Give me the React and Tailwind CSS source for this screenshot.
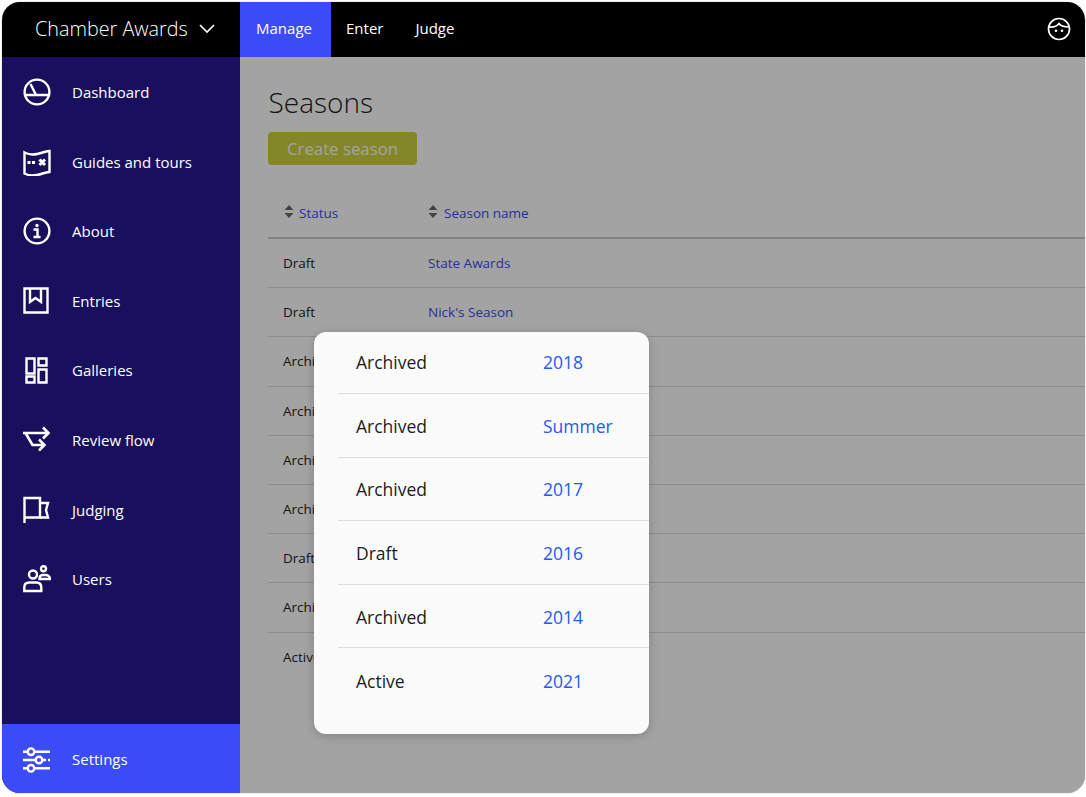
import React from 'react';

const font = "font-['Open_Sans',sans-serif]";

const navItems = [
    { label: 'Dashboard', icon: DashboardIcon },
    { label: 'Guides and tours', icon: MapIcon },
    { label: 'About', icon: InfoIcon },
    { label: 'Entries', icon: EntriesIcon },
    { label: 'Galleries', icon: GalleriesIcon },
    { label: 'Review flow', icon: FlowIcon },
    { label: 'Judging', icon: FlagIcon },
    { label: 'Users', icon: UsersIcon },
];

const tableRows = ['Draft', 'Draft', 'Archived', 'Archived', 'Archived', 'Archived', 'Draft', 'Archived', 'Active'];

const modalRows = [
    ['Archived', '2018'],
    ['Archived', 'Summer'],
    ['Archived', '2017'],
    ['Draft', '2016'],
    ['Archived', '2014'],
    ['Active', '2021'],
];

function Svg({ children }) {
    return (
        <svg width="28" height="28" viewBox="0 0 28 28" fill="none" stroke="white" strokeWidth="2.4">
            {children}
        </svg>
    );
}

function DashboardIcon() {
    return (
        <Svg>
            <circle cx="14" cy="14" r="12.4" />
            <path d="M2 17h24M7.5 6l5.500 11" />
        </Svg>
    );
}

function MapIcon() {
    return (
        <Svg>
            <path d="M1.500 4.500c4 2 8 2.500 12.500 1.500s8-2.500 12.500-3v21c-4.500.5-8 2-12.500 3s-8.500 .5-12.500-1.500z" />
            <path d="M4.500 14.500h3M9 14.500h3" strokeWidth="3" />
            <path d="M16.500 11.500l5.500 5.500M22 11.500l-5.500 5.500" strokeWidth="3" />
        </Svg>
    );
}

function InfoIcon() {
    return (
        <Svg>
            <circle cx="14" cy="14" r="12.400" />
            <circle cx="14" cy="8.500" r="1.700" fill="white" stroke="none" />
            <path d="M10.500 12.500h4v7M10.500 20h7" strokeWidth="2.400" />
        </Svg>
    );
}

function EntriesIcon() {
    return (
        <Svg>
            <path d="M1.500 1.500h23v24h-23z" />
            <path d="M7 2v13l5.500-4 5.500 4V2" />
        </Svg>
    );
}

function GalleriesIcon() {
    return (
        <Svg>
            <path d="M3.500 1.500h8v15h-8zM15.500 1.500h8v7h-8zM15.500 12.500h8v13h-8zM3.500 19.500h8v6h-8z" />
        </Svg>
    );
}

function FlowIcon() {
    return (
        <Svg>
            <path d="M0 7h25M20 1.500l5.500 5.500-5.500 5.500" strokeWidth="2.600" />
            <path d="M2.500 7l7 12h11.500M16 13.500l5.500 5.500-5.500 5.500" strokeWidth="2.600" />
        </Svg>
    );
}

function FlagIcon() {
    return (
        <Svg>
            <path d="M1.500 27V2H17v19.500H1.500" />
            <path d="M17 7h8l-2 7 2 7.500h-8" />
        </Svg>
    );
}

function UsersIcon() {
    return (
        <Svg>
            <circle cx="10" cy="9.500" r="4" />
            <path d="M1.300 26v-3.500c0-3 2-5 5-5h7c3 0 5 2 5 5V26z" />
            <circle cx="20.500" cy="3.700" r="2.500" />
            <path d="M16.500 14c0-2.500 1-4 3-4h3c2.500 0 4.500 1.500 4.500 4z" />
        </Svg>
    );
}

function SettingsIcon() {
    return (
        <Svg>
            <path d="M0 5.700h4M12 5.700h15M0 14h12M20 14h3M25 14h2M0 22.300h4M12 22.300h15" />
            <circle cx="8" cy="5.700" r="3.300" />
            <circle cx="16" cy="14" r="3.300" />
            <circle cx="8" cy="22.300" r="3.300" />
        </Svg>
    );
}

function FaceIcon() {
    return (
        <svg width="24" height="24" viewBox="0 0 24 24" fill="none" stroke="white" strokeWidth="1.700">
            <circle cx="12" cy="12" r="10.500" />
            <path d="M2.500 10c4 .5 7-.5 9.500-3.500 1.500 2 5 3.500 9.500 3.500" />
            <circle cx="9" cy="13.700" r="1.300" fill="white" stroke="none" />
            <circle cx="15" cy="13.700" r="1.300" fill="white" stroke="none" />
        </svg>
    );
}

function SortArrows() {
    return (
        <svg width="10" height="13" viewBox="0 0 10 13" fill="#6b6b6b" className="mb-[3px]">
            <path d="M5 0l4.500 5h-9zM5 13L.5 8h9z" />
        </svg>
    );
}

export default function App() {
    return (
        <div className={`${font} h-[797px] w-[1086px] bg-white pl-[2px] pt-[2px]`}>
            <div className="relative flex h-[791px] w-[1083px] flex-col overflow-hidden rounded-[18px] bg-white shadow-[0_0_1px_rgba(0,0,0,0.6)]">
                {/* top bar */}
                <header className="flex h-[55px] shrink-0 items-center bg-black pb-[2px] text-white">
                    <div className="flex w-[238px] items-center pl-[33px]">
                        <span className="text-[19.800px] font-light">Chamber Awards</span>
                        <svg width="16" height="10" viewBox="0 0 16 10" fill="none" stroke="white" strokeWidth="1.600" className="ml-[11px]">
                            <path d="M1 1l7 7 7-7" />
                        </svg>
                    </div>
                    <div className="-mb-[2px] flex h-[55px] w-[91px] items-center justify-center bg-[#3b4bf5] pb-[2px] pr-[3px] text-[15px]">Manage</div>
                    <div className="ml-[15px] text-[15px]">Enter</div>
                    <div className="ml-[32px] text-[15px]">Judge</div>
                    <div className="ml-auto mr-[14px] flex">
                        <FaceIcon />
                    </div>
                </header>

                <div className="flex min-h-0 flex-1">
                    {/* sidebar */}
                    <aside className="flex w-[238px] shrink-0 flex-col bg-[#18105c] text-white">
                        <nav className="flex flex-1 flex-col pt-[0.400px]">
                            {navItems.map(({ label, icon: Icon }) => (
                                <div key={label} className="flex h-[69.600px] items-center pl-[21px]">
                                    <Icon />
                                    <span className="ml-[21px] text-[15px]">{label}</span>
                                </div>
                            ))}
                        </nav>
                        <div className="flex h-[69px] items-center bg-[#3b4bf5] pl-[21px] pt-[2px]">
                            <SettingsIcon />
                            <span className="ml-[21px] text-[15px]">Settings</span>
                        </div>
                    </aside>

                    {/* page */}
                    <main className="min-w-0 flex-1 pl-[28px] pt-[26px]">
                        <h1 className="pl-[0.500px] text-[28px] leading-[38px] font-light text-[#222]">Seasons</h1>
                        <button className="mt-[11px] block h-[33px] w-[149px] rounded-[4px] bg-[#cdd33f] text-center text-[16.800px] text-white">
                            Create season
                        </button>
                        <div className="mt-[24px] flex h-[50px] items-center border-b-2 border-[#cccccc] text-[13.500px] text-[#3b4bf5]">
                            <div className="flex w-[160px] items-center gap-[5px] pl-[16px]">
                                <SortArrows />
                                <span>Status</span>
                            </div>
                            <div className="flex items-center gap-[6px]">
                                <SortArrows />
                                <span>Season name</span>
                            </div>
                        </div>
                        {tableRows.map((status, i) => (
                            <div key={i} className="flex h-[49.200px] items-center border-b border-[#dddddd] text-[13.500px] text-[#222] last:border-b-0">
                                <div className="w-[160px] pl-[15px]">{status}</div>
                                <div className="text-[#3b4bf5]">{i === 0 ? 'State Awards' : i === 1 ? "Nick's Season" : ''}</div>
                            </div>
                        ))}
                    </main>
                </div>

                {/* dim layer */}
                <div className="absolute inset-0 top-[55px] left-[238px] bg-black/36" />

                {/* popup */}
                <div className="absolute left-[312px] top-[330px] h-[402px] w-[335px] rounded-[12px] bg-[#fbfbfb] pl-[24px] shadow-[0_2px_10px_rgba(0,0,0,0.2)]">
                    <div className="-mt-[1.500px]">
                        {modalRows.map(([status, year], i) => (
                            <div key={i} className="flex h-[63.600px] items-center border-b border-[#dddddd] pt-[1px] text-[17.500px] last:border-b-0">
                                <div className="w-[205px] pl-[18px] text-[#1c1c1c]">{status}</div>
                                <div className="text-[#2558fa]">{year}</div>
                            </div>
                        ))}
                    </div>
                </div>
            </div>
        </div>
    );
}
